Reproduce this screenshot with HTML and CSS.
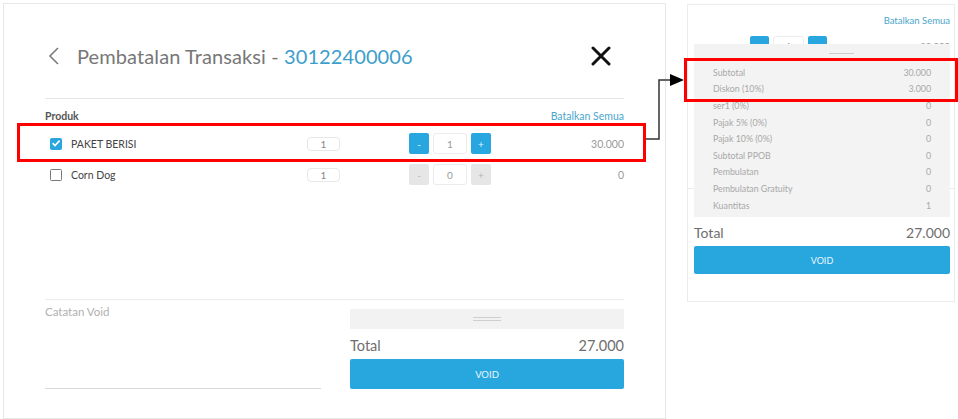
FILE: index.html
```html
<!DOCTYPE html>
<html lang="id">
<head>
<meta charset="utf-8">
<title>Pembatalan Transaksi</title>
<link rel="stylesheet" href="styles.css">
</head>
<body>
<div class="canvas">
  <section class="dialog">
    <header class="dlg-head">
      <svg class="back" width="12" height="18" viewBox="0 0 12 18"><path d="M10 1 L2 9 L10 17" fill="none" stroke="#7a7a7a" stroke-width="1.6"/></svg>
      <h1 class="title">Pembatalan Transaksi - <span class="trx">30122400006</span></h1>
      <svg class="close" width="20" height="20" viewBox="0 0 20 20"><path d="M2 2 L18 18 M18 2 L2 18" stroke="#111" stroke-width="3" stroke-linecap="round"/></svg>
    </header>
    <div class="thead">
      <span class="th">Produk</span>
      <span class="link">Batalkan Semua</span>
    </div>
    <div class="row">
      <label class="prod"><span class="cb checked"><svg width="12" height="12" viewBox="0 0 12 12"><path d="M2.6 6.2 L5 8.5 L9.6 3.6" fill="none" stroke="#fff" stroke-width="1.6"/></svg></span>PAKET BERISI</label>
      <span class="qty">1</span>
      <div class="stepper"><span class="sbtn on">-</span><span class="sin">1</span><span class="sbtn on">+</span></div>
      <span class="amt">30.000</span>
    </div>
    <div class="row">
      <label class="prod"><span class="cb"></span>Corn Dog</label>
      <span class="qty">1</span>
      <div class="stepper"><span class="sbtn">-</span><span class="sin">0</span><span class="sbtn">+</span></div>
      <span class="amt">0</span>
    </div>
    <div class="dlg-foot">
      <div class="note"><span>Catatan Void</span></div>
      <div class="summary">
        <div class="bar"><span class="handle"></span></div>
        <div class="total"><span>Total</span><span>27.000</span></div>
        <div class="void">VOID</div>
      </div>
    </div>
  </section>

  <section class="zpanel">
    <div class="zhead"><span class="link small">Batalkan Semua</span></div>
    <div class="zrow">
      <div class="stepper small"><span class="sbtn on">-</span><span class="sin">1</span><span class="sbtn on">+</span></div>
      <span class="amt small">30.000</span>
    </div>
    <div class="zfoot">
      <div class="zbar">
        <div class="expand">
          <span class="handle wide"></span>
          <ul class="lines">
            <li><span>Subtotal</span><span>30.000</span></li>
            <li><span>Diskon (10%)</span><span>3.000</span></li>
            <li><span>ser1 (0%)</span><span>0</span></li>
            <li><span>Pajak 5% (0%)</span><span>0</span></li>
            <li><span>Pajak 10% (0%)</span><span>0</span></li>
            <li><span>Subtotal PPOB</span><span>0</span></li>
            <li><span>Pembulatan</span><span>0</span></li>
            <li><span>Pembulatan Gratuity</span><span>0</span></li>
            <li><span>Kuantitas</span><span>1</span></li>
          </ul>
        </div>
      </div>
      <div class="total small"><span>Total</span><span>27.000</span></div>
      <div class="void small">VOID</div>
    </div>
  </section>

  <div class="hl hl-a"></div>
  <div class="hl hl-b"></div>
  <svg class="connector" width="958" height="419" viewBox="0 0 958 419">
    <polyline points="646,139 659,139 659,80 671,80" fill="none" stroke="#333" stroke-width="1.5"/>
    <polygon points="670,74 684,80 670,86" fill="#000"/>
  </svg>
</div>
</body>
</html>
```

FILE: styles.css
```css
* { box-sizing: border-box; margin: 0; padding: 0; }
html, body { background: #fff; }
body {
  font-family: Lato, "Open Sans", Arial, sans-serif;
  color: #555;
}
.canvas {
  position: relative;
  width: 958px;
  height: 419px;
  display: flex;
  align-items: flex-start;
  overflow: hidden;
}

/* ---------- left dialog ---------- */
.dialog {
  margin: 3px 0 0 3px;
  width: 663px;
  height: 416px;
  border: 1px solid #e8e8e8;
  display: flex;
  flex-direction: column;
  padding: 0 41px;
}
.dlg-head {
  height: 95px;
  padding-top: 10px;
  border-bottom: 1px solid #e6e6e6;
  display: flex;
  align-items: center;
}
.back { margin-left: 3px; margin-right: 17px; flex: none; }
.title {
  font-weight: 400;
  font-size: 20px;
  color: #777;
  letter-spacing: 0.1px;
  flex: 1;
}
.trx { color: #3c9ecb; }
.close { margin-right: 13px; flex: none; }

.thead {
  display: flex;
  justify-content: space-between;
  padding: 10px 0 5px;
  line-height: 14px;
  font-size: 10.5px;
}
.th { font-weight: 700; color: #555; }
.link { color: #4aa6cc; }

.row {
  height: 31px;
  display: grid;
  grid-template-columns: 262px 102px 82px 1fr;
  align-items: center;
  font-size: 10.5px;
}
.prod { display: flex; align-items: center; color: #444; }
.cb {
  width: 12px; height: 12px;
  margin: 0 9px 0 5px;
  border: 1.5px solid #777;
  border-radius: 1.5px;
  display: flex;
}
.cb.checked { background: #2aa6de; border-color: #2aa6de; }
.cb.checked svg { margin: -1.5px; }
.qty {
  width: 33px; height: 14px;
  border: 1px solid #e8e8e8;
  border-radius: 4px;
  text-align: center;
  font-size: 10px;
  line-height: 12px;
  color: #888;
}
.stepper { display: flex; gap: 4px; height: 21px; }
.sbtn {
  width: 20px;
  background: #e6e6e6;
  color: #b5b5b5;
  border-radius: 2px;
  font-size: 10px;
  display: flex; align-items: center; justify-content: center;
}
.sbtn.on { background: #27a6df; color: #e8f5fc; }
.sin {
  width: 34px;
  border: 1px solid #ececec;
  border-radius: 3px;
  color: #999;
  font-size: 10px;
  display: flex; align-items: center; justify-content: center;
}
.amt { justify-self: end; color: #999; font-size: 10.5px; }

.dlg-foot {
  margin-top: auto;
  border-top: 1px solid #ececec;
  display: flex;
  justify-content: space-between;
  padding-bottom: 29px;
}
.note {
  width: 276px;
  border-bottom: 1px solid #d8d8d8;
  padding-top: 4px;
  font-size: 11.5px;
  line-height: 15px;
  color: #b0b0b0;
}
.summary { width: 274px; padding-top: 9px; }
.bar {
  height: 20px;
  background: #f2f2f2;
  display: flex; align-items: center; justify-content: center;
}
.handle {
  width: 28px; height: 4px;
  border-top: 1px solid #cfcfcf;
  border-bottom: 1px solid #cfcfcf;
}
.total {
  margin-top: 8px;
  display: flex; justify-content: space-between;
  font-size: 14.5px;
  line-height: 18px;
  color: #6e6e6e;
}
.void {
  margin-top: 4px;
  height: 30px;
  background: #28a7df;
  border-radius: 2px;
  color: #eaf6fc;
  font-size: 9.5px;
  display: flex; align-items: center; justify-content: center;
}

/* ---------- right zoom panel ---------- */
.zpanel {
  margin: 4px 0 0 21px;
  width: 268px;
  height: 298px;
  border: 1px solid #ececec;
  display: flex;
  flex-direction: column;
  padding: 0 4px 0 6px;
}
.zhead {
  padding-top: 7px;
  line-height: 12px;
  text-align: right;
}
.link.small { font-size: 9.5px; }
.zrow {
  margin-top: 9px;
  height: 21px;
  display: flex;
  align-items: center;
  justify-content: space-between;
  padding-left: 56px;
}
.stepper.small { height: 21px; gap: 4px; }
.stepper.small .sbtn { width: 19px; }
.stepper.small .sin { width: 31px; font-size: 9px; }
.amt.small { font-size: 9.5px; }

.zfoot {
  margin: auto -4px 0 -6px;
  padding: 0 4px 27px 6px;
  border-top: 1px solid #ececec;
}
.zbar {
  position: relative;
  margin-top: 8px;
  height: 20px;
}
.expand {
  position: absolute;
  left: 0; right: 0; bottom: 0;
  height: 173px;
  background: #f3f3f3;
  padding: 9px 19px 0;
}
.handle.wide {
  display: block;
  margin: 0 auto 0 116px;
  width: 25px; height: 1px;
  border: 0;
  background: #cdcdcd;
}
.lines {
  list-style: none;
  margin-top: 10px;
}
.lines li {
  height: 16.6px;
  display: flex;
  justify-content: space-between;
  align-items: center;
  font-size: 8.8px;
  color: #a8a8a8;
}
.total.small { margin-top: 7px; font-size: 14px; }
.void.small { height: 28px; font-size: 9px; }

/* ---------- annotations ---------- */
.hl {
  position: absolute;
  border: 3px solid #f00;
}
.hl-a { left: 17px; top: 123px; width: 629px; height: 39px; }
.hl-b { left: 684px; top: 58px; width: 274px; height: 44px; }
.connector { position: absolute; left: 0; top: 0; pointer-events: none; }
```
